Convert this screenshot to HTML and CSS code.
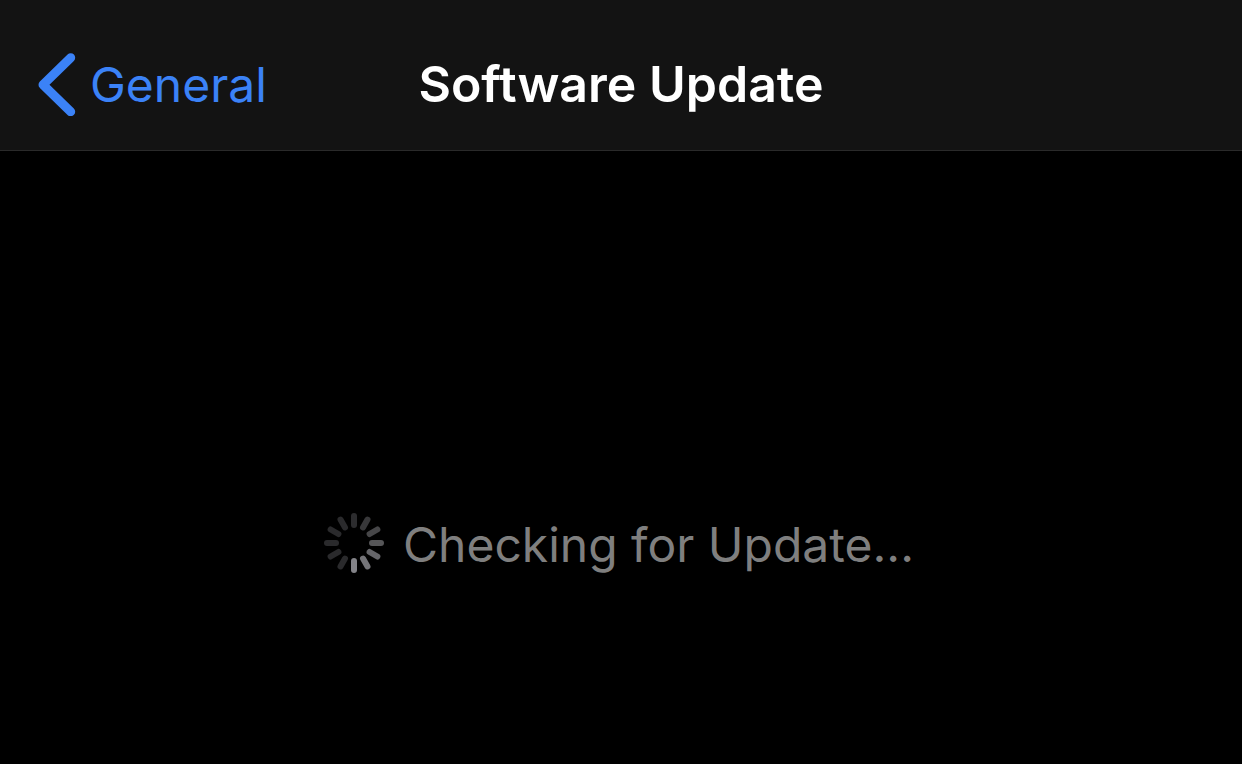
FILE: index.html
```html
<!DOCTYPE html>
<html lang="en">
<head>
<meta charset="utf-8">
<meta name="viewport" content="width=device-width, initial-scale=1">
<title>Software Update</title>
<link rel="stylesheet" href="styles.css">
</head>
<body>
<header class="navbar">
  <a class="back" href="#general">
    <svg class="chevron" viewBox="0 0 38 64" aria-hidden="true"><path d="M32.7 5.7 5 32.7l27.7 27"/></svg>
    <span class="back-text">General</span>
  </a>
  <h1 class="title">Software Update</h1>
</header>
<main class="content">
  <div class="status" role="status">
    <svg class="spinner" viewBox="-30 -30 60 60" aria-hidden="true">
      <g stroke-width="6" stroke-linecap="round">
        <path d="M0-27v9" stroke="#2c2c2e"/>
        <path d="M0-27v9" stroke="#38383a" transform="rotate(30)"/>
        <path d="M0-27v9" stroke="#464648" transform="rotate(60)"/>
        <path d="M0-27v9" stroke="#565658" transform="rotate(90)"/>
        <path d="M0-27v9" stroke="#656569" transform="rotate(120)"/>
        <path d="M0-27v9" stroke="#747478" transform="rotate(150)"/>
        <path d="M0-27v9" stroke="#838388" transform="rotate(180)"/>
        <path d="M0-27v9" stroke="#2a2a2c" transform="rotate(210)"/>
        <path d="M0-27v9" stroke="#2a2a2c" transform="rotate(240)"/>
        <path d="M0-27v9" stroke="#2a2a2c" transform="rotate(270)"/>
        <path d="M0-27v9" stroke="#2a2a2c" transform="rotate(300)"/>
        <path d="M0-27v9" stroke="#2a2a2c" transform="rotate(330)"/>
      </g>
    </svg>
    <span class="status-text">Checking for Update...</span>
  </div>
</main>
</body>
</html>
```

FILE: styles.css
```css
* {
  box-sizing: border-box;
}

body {
  margin: 0;
  min-height: 100vh;
  display: flex;
  flex-direction: column;
  background: #000;
  color: #fff;
  font-family: Inter, "Liberation Sans", sans-serif;
  font-size: 48px;
  line-height: 60px;
}

.navbar {
  display: grid;
  grid-template-columns: 1fr auto 1fr;
  align-items: center;
  padding: 52px 38px 34px;
  background: #131313;
  border-bottom: 1px solid #2a2a2a;
}

.back {
  display: flex;
  align-items: center;
  gap: 14px;
  color: #3b82f7;
  text-decoration: none;
}

.back-text {
  padding-top: 2px;
}

.chevron {
  width: 38px;
  height: 64px;
  fill: none;
  stroke: currentColor;
  stroke-width: 9;
  stroke-linecap: round;
  stroke-linejoin: round;
}

.title {
  margin: 0;
  font-size: 50px;
  font-weight: 600;
}

.content {
  flex: 1;
  display: flex;
  align-items: center;
  justify-content: center;
  padding-top: 170px;
}

.status {
  display: flex;
  align-items: center;
  gap: 19px;
  padding-right: 4px;
  color: #7f7f7f;
}

.status-text {
  padding-top: 5px;
}

.spinner {
  width: 60px;
  height: 60px;
}
```
